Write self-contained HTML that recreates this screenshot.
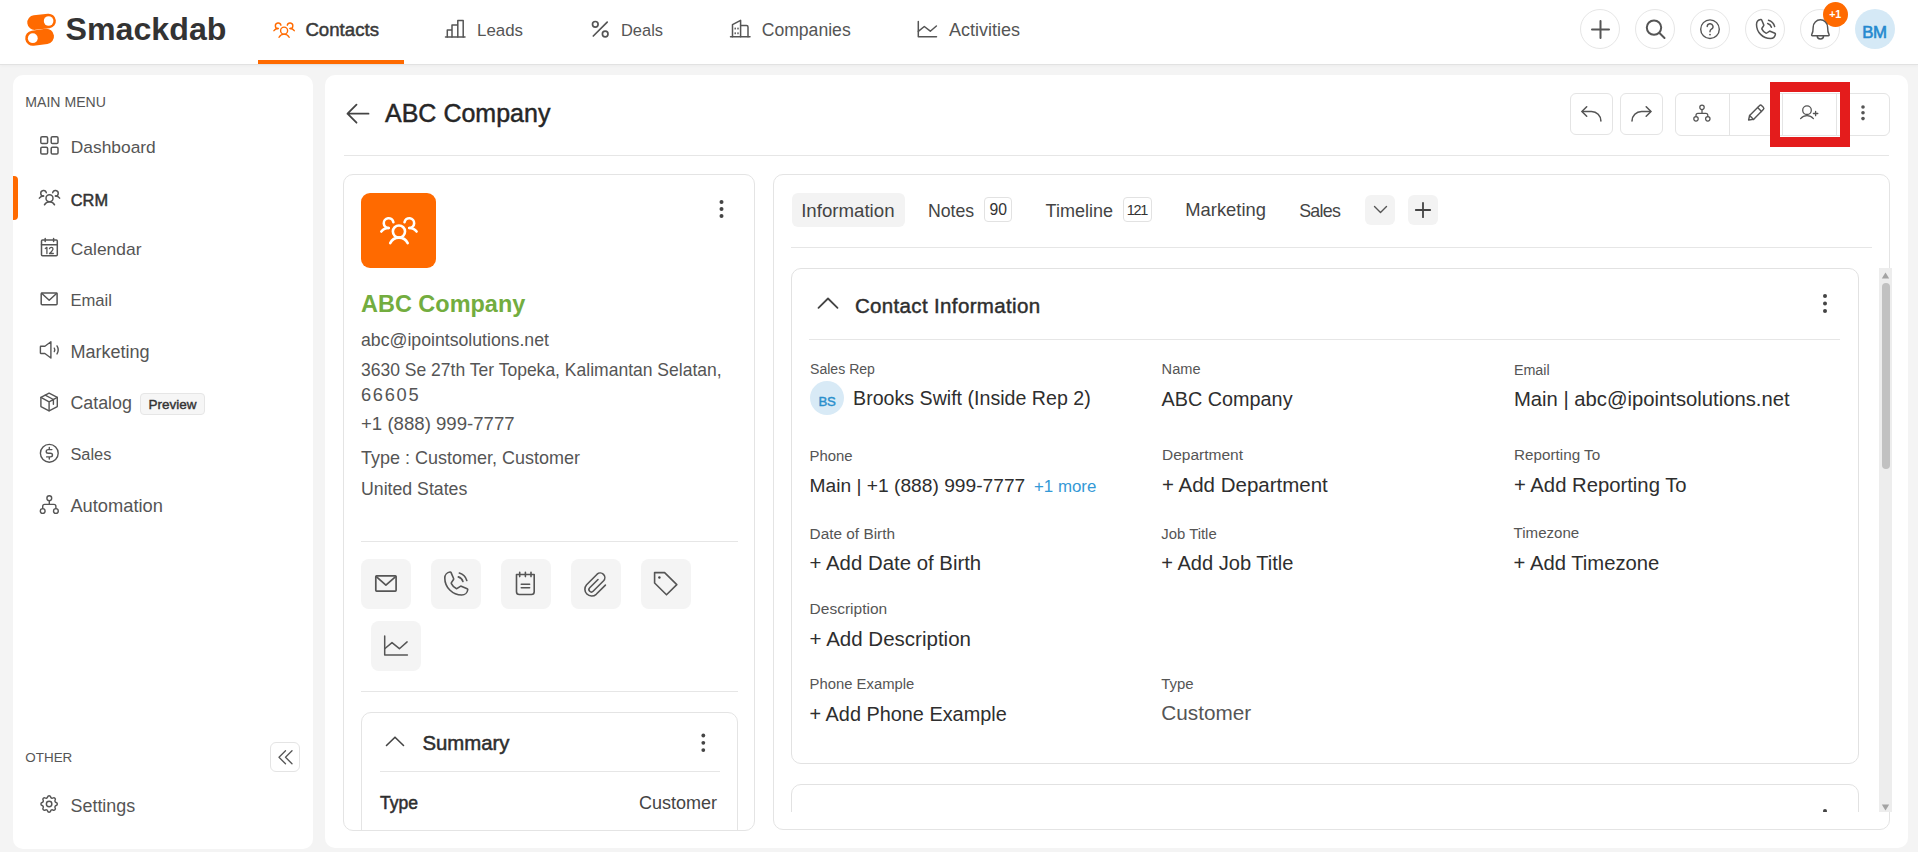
<!DOCTYPE html>
<html><head><meta charset="utf-8"><title>Smackdab - ABC Company</title>
<style>
html,body{margin:0;padding:0;}
body{width:1918px;height:852px;position:relative;overflow:hidden;background:#f4f4f4;font-family:"Liberation Sans",sans-serif;}
text{font-family:"Liberation Sans",sans-serif;white-space:pre;}
.a{position:absolute;box-sizing:border-box;}
svg.i{position:absolute;overflow:visible;fill:none;stroke:#555;stroke-width:1.5;stroke-linecap:round;stroke-linejoin:round;}
</style></head><body>
<!-- header -->
<div class="a" style="left:0;top:0;width:1918px;height:64px;background:#fff;border-bottom:1px solid #e2e2e2;height:65px;box-shadow:0 1px 3px rgba(0,0,0,.035)"></div>
<div class="a" style="left:258px;top:60px;width:146px;height:4px;background:#ff6a00"></div>
<!-- sidebar card -->
<div class="a" style="left:13px;top:75px;width:300px;height:774px;background:#fff;border-radius:10px"></div>
<div class="a" style="left:13px;top:176px;width:5px;height:44px;background:#ff6a00;border-radius:0 4px 4px 0"></div>
<div class="a" style="left:140px;top:393px;width:65px;height:22px;background:#f6f6f6;border:1px solid #e6e6e6;border-radius:4px"></div>
<div class="a" style="left:270px;top:742px;width:30px;height:30px;background:#fff;border:1px solid #e4e4e4;border-radius:6px"></div>
<!-- main card -->
<div class="a" style="left:325px;top:75px;width:1583px;height:773px;background:#fff;border-radius:10px"></div>
<div class="a" style="left:344px;top:155px;width:1545px;height:1px;background:#e6e6e6"></div>
<!-- toolbar -->
<div class="a" style="left:1570px;top:93px;width:43px;height:42px;border:1px solid #e4e4e4;border-radius:6px"></div>
<div class="a" style="left:1620px;top:93px;width:43px;height:42px;border:1px solid #e4e4e4;border-radius:6px"></div>
<div class="a" style="left:1675px;top:93px;width:215px;height:43px;border:1px solid #e4e4e4;border-radius:6px"></div>
<div class="a" style="left:1729px;top:93px;width:1px;height:43px;background:#e4e4e4"></div>
<div class="a" style="left:1782px;top:93px;width:1px;height:43px;background:#e4e4e4"></div>
<div class="a" style="left:1836px;top:93px;width:1px;height:43px;background:#e4e4e4"></div>
<!-- header circles -->
<div class="a" style="left:1580px;top:9px;width:40px;height:40px;border:1px solid #e6e6e6;border-radius:50%"></div>
<div class="a" style="left:1635px;top:9px;width:40px;height:40px;border:1px solid #e6e6e6;border-radius:50%"></div>
<div class="a" style="left:1690px;top:9px;width:40px;height:40px;border:1px solid #e6e6e6;border-radius:50%"></div>
<div class="a" style="left:1745px;top:9px;width:40px;height:40px;border:1px solid #e6e6e6;border-radius:50%"></div>
<div class="a" style="left:1800px;top:9px;width:40px;height:40px;border:1px solid #e6e6e6;border-radius:50%"></div>
<div class="a" style="left:1855px;top:9px;width:40px;height:40px;background:#d5e9f6;border-radius:50%"></div>
<div class="a" style="left:1823px;top:1.5px;width:25px;height:25px;background:#ff6a00;border-radius:50%"></div>
<!-- left card -->
<div class="a" style="left:343px;top:174px;width:412px;height:657px;border:1px solid #e4e4e4;border-radius:10px;overflow:hidden">
  <div class="a" style="left:17px;top:18px;width:75px;height:75px;background:#ff6a00;border-radius:9px"></div>
  <div class="a" style="left:17px;top:366px;width:377px;height:1px;background:#e6e6e6"></div>
  <div class="a" style="left:17px;top:384px;width:50px;height:50px;background:#f4f4f4;border-radius:8px"></div>
  <div class="a" style="left:87px;top:384px;width:50px;height:50px;background:#f4f4f4;border-radius:8px"></div>
  <div class="a" style="left:157px;top:384px;width:50px;height:50px;background:#f4f4f4;border-radius:8px"></div>
  <div class="a" style="left:227px;top:384px;width:50px;height:50px;background:#f4f4f4;border-radius:8px"></div>
  <div class="a" style="left:297px;top:384px;width:50px;height:50px;background:#f4f4f4;border-radius:8px"></div>
  <div class="a" style="left:27px;top:446px;width:50px;height:50px;background:#f4f4f4;border-radius:8px"></div>
  <div class="a" style="left:17px;top:516px;width:377px;height:1px;background:#e6e6e6"></div>
  <div class="a" style="left:17px;top:537px;width:377px;height:140px;border:1px solid #e4e4e4;border-radius:10px"></div>
  <div class="a" style="left:36px;top:596px;width:340px;height:1px;background:#e6e6e6"></div>
</div>
<!-- right card -->
<div class="a" style="left:773px;top:174px;width:1117px;height:656px;border:1px solid #e4e4e4;border-radius:10px"></div>
<div class="a" style="left:792px;top:193px;width:113px;height:34px;background:#f3f3f3;border-radius:6px"></div>
<div class="a" style="left:984px;top:197px;width:28px;height:25px;border:1px solid #e2e2e2;border-radius:4px"></div>
<div class="a" style="left:1123px;top:197px;width:29px;height:25px;border:1px solid #e2e2e2;border-radius:4px"></div>
<div class="a" style="left:1365px;top:195px;width:30px;height:30px;background:#f3f3f3;border-radius:6px"></div>
<div class="a" style="left:1408px;top:195px;width:30px;height:30px;background:#f3f3f3;border-radius:6px"></div>
<div class="a" style="left:791px;top:247px;width:1081px;height:1px;background:#e6e6e6"></div>
<!-- scroll area -->
<div class="a" style="left:774px;top:268px;width:1118px;height:544px;overflow:hidden">
  <div class="a" style="left:17px;top:0px;width:1068px;height:496px;border:1px solid #e2e2e2;border-radius:10px"></div>
  <div class="a" style="left:35px;top:71px;width:1031px;height:1px;background:#e6e6e6"></div>
  <div class="a" style="left:36px;top:113px;width:34px;height:34px;background:#d8eaf6;border-radius:50%"></div>
  <div class="a" style="left:17px;top:516px;width:1068px;height:200px;border:1px solid #e2e2e2;border-radius:10px"></div>
  <div class="a" style="left:1049px;top:541px;width:4px;height:4px;background:#444;border-radius:50%"></div>
  <!-- scrollbar -->
  <div class="a" style="left:1105px;top:0;width:13px;height:544px;background:#ededed"></div>
  <div class="a" style="left:1108px;top:15px;width:8px;height:186px;background:#c1c1c1;border-radius:4px"></div>
</div>
<!-- red highlight -->
<div class="a" style="left:1770px;top:82px;width:80px;height:65px;border:10px solid #e41c1c"></div>
<svg class="a" style="left:0;top:0;width:1918px;height:852px;overflow:visible" width="1918" height="852" viewBox="0 0 1918 852" fill="none" stroke="#555" stroke-width="1.5" stroke-linecap="round" stroke-linejoin="round">
<!-- logo -->
<g stroke="none">
  <line x1="34.6" y1="22.6" x2="48.6" y2="21" stroke="#ff6a00" stroke-width="14.6" stroke-linecap="round"/>
  <line x1="32.8" y1="38.2" x2="46.4" y2="36.4" stroke="#ff6a00" stroke-width="15.2" stroke-linecap="round"/>
  <circle cx="48.6" cy="21" r="4.8" fill="#fff"/>
  <circle cx="32.8" cy="38.2" r="4.9" fill="#fff"/>
</g>
<!-- contacts nav icon (orange) -->
<g transform="translate(272.9,18.4) scale(0.0875)" stroke="#ff6a00" stroke-width="16">
  <circle cx="128" cy="140" r="40"/><path d="M196,116a59.8,59.8,0,0,1,48,24"/><path d="M12,140a59.8,59.8,0,0,1,48-24"/><path d="M70.4,216a64.1,64.1,0,0,1,115.2,0"/><path d="M60,116A32,32,0,1,1,91.4,78"/><path d="M164.6,78A32,32,0,1,1,196,116"/>
</g>
<!-- leads -->
<g stroke-width="1.5"><path d="M445.5,37H465"/><path d="M447.3,37V29.9H452V37M452,37V25.1H457.8V37M457.8,37V20.4H463.2V37"/></g>
<!-- deals -->
<g stroke-width="1.7"><circle cx="595.3" cy="24.3" r="2.8"/><circle cx="605.2" cy="34" r="2.8"/><path d="M593.3,36L607.2,22.1"/></g>
<!-- companies -->
<g stroke-width="1.5"><path d="M730.5,36.8H750"/><path d="M732.5,36.8V24.6L740.6,20.4V36.8"/><path d="M740.6,25.6H746.5Q748,25.6 748,27.1V36.8"/></g>
<g fill="#555" stroke="none"><rect x="734.5" y="27.6" width="1.4" height="2" rx=".5"/><rect x="737.3" y="27.6" width="1.4" height="2" rx=".5"/><rect x="734.5" y="32.3" width="1.4" height="2" rx=".5"/><rect x="737.3" y="32.3" width="1.4" height="2" rx=".5"/></g>
<!-- activities -->
<g stroke-width="1.5"><path d="M918.3,21.4V36.8H936.5"/><path d="M918.3,31.4L924.3,26.5L930.3,31.2L936.4,26"/></g>
<!-- header right icons -->
<g stroke-width="2"><path d="M1600.5,21V38M1592,29.5H1609"/></g>
<g stroke-width="2"><circle cx="1654" cy="27.6" r="7.2"/><path d="M1659.2,32.8L1664.5,38"/></g>
<g stroke-width="1.4"><circle cx="1710" cy="29.2" r="9.3"/><path d="M1707.2,26.6a2.9,2.9 0 1 1 4.2,2.6q-1.4,.7 -1.4,2.2v.4"/></g>
<circle cx="1710" cy="34.6" r=".9" fill="#555" stroke="none"/>
<g transform="translate(1752.4,16.2) scale(0.103)" stroke-width="14.6">
  <path d="M92.5,124.8a83.6,83.6,0,0,0,39,38.9,8,8,0,0,0,7.9-.6l25-16.7a7.9,7.9,0,0,1,7.6-.7l46.8,20.1a7.9,7.9,0,0,1,4.8,8.3A48,48,0,0,1,176,216,136,136,0,0,1,40,80,48,48,0,0,1,81.9,32.4a7.9,7.9,0,0,1,8.3,4.8l20.1,46.9a8,8,0,0,1-.6,7.5L93,117A8,8,0,0,0,92.5,124.8Z"/><path d="M156.4,40A88.2,88.2,0,0,1,216,99.6"/><path d="M148.2,71A56.1,56.1,0,0,1,185,107.8"/>
</g>
<g transform="translate(1807.6,16.6) scale(0.1)" stroke-width="14.5">
  <path d="M96,192a32,32,0,0,0,64,0"/><path d="M56,104a72,72,0,0,1,144,0c0,35.8,8.2,64.5,14.8,76A8,8,0,0,1,208,192H48a8,8,0,0,1-6.9-12C47.7,168.5,56,139.8,56,104Z"/>
</g>
<!-- page back arrow -->
<g stroke="#444" stroke-width="1.8"><path d="M347.5,113.7H368.5M356.5,104.7L347.5,113.7L356.5,122.7"/></g>
<!-- toolbar icons -->
<g stroke-width="1.55"><path d="M1586.7,106.7L1581.9,111.5L1586.7,116.3"/><path d="M1582.3,111.5H1591.5A9.5,9.5 0 0 1 1600.9,121"/></g>
<g stroke-width="1.55"><path d="M1646.2,106.7L1651,111.5L1646.2,116.3"/><path d="M1650.6,111.5H1641.5A9.5,9.5 0 0 0 1632,121"/></g>
<g stroke-width="1.25"><circle cx="1702" cy="107.3" r="2.2"/><circle cx="1696" cy="118.8" r="2.2"/><circle cx="1707.8" cy="118.8" r="2.2"/><path d="M1702,109.5V113.3M1696,116.6V115.3Q1696,113.3 1698,113.3H1705.8Q1707.8,113.3 1707.8,115.3V116.6"/></g>
<g stroke-width="1.4"><path d="M1748.6,120L1749.6,115.5L1759.4,105.7Q1760.6,104.5 1761.8,105.7L1763.3,107.2Q1764.5,108.4 1763.3,109.6L1753.5,119.4Z"/><path d="M1757.6,107.5L1761.5,111.4M1749.6,115.5L1753.5,119.4"/></g>
<g stroke-width="1.3"><circle cx="1807" cy="110.2" r="4.3"/><path d="M1800.6,118.6A8.5,8.5 0 0 1 1813.4,118.6"/><path d="M1815.6,111.3V115.7M1813.4,113.5H1817.8"/></g>
<g fill="#555" stroke="none"><circle cx="1863" cy="107" r="1.8"/><circle cx="1863" cy="112.8" r="1.8"/><circle cx="1863" cy="118.6" r="1.8"/></g>
<!-- sidebar icons -->
<g stroke-width="1.5"><rect x="40.8" y="136.8" width="6.8" height="6.8" rx="1.3"/><rect x="51.2" y="136.8" width="6.8" height="6.8" rx="1.3"/><rect x="40.8" y="147.2" width="6.8" height="6.8" rx="1.3"/><rect x="51.2" y="147.2" width="6.8" height="6.8" rx="1.3"/></g>
<g transform="translate(38.3,185.9) scale(0.0875)" stroke-width="17">
  <circle cx="128" cy="140" r="40"/><path d="M196,116a59.8,59.8,0,0,1,48,24"/><path d="M12,140a59.8,59.8,0,0,1,48-24"/><path d="M70.4,216a64.1,64.1,0,0,1,115.2,0"/><path d="M60,116A32,32,0,1,1,91.4,78"/><path d="M164.6,78A32,32,0,1,1,196,116"/>
</g>
<g stroke-width="1.5"><rect x="41.5" y="240" width="15.8" height="15.8" rx="1"/><path d="M41.5,244.8H57.3M45.2,238.6V241.4M53.6,238.6V241.4"/></g>
<g stroke-width="1.3"><path d="M45.3,248.5L46.9,247.4V253.6"/><path d="M49.5,248.7Q49.8,247.3 51.3,247.3Q53,247.3 53,248.9Q53,250.1 49.5,253.5H53.3"/></g>
<g stroke-width="1.5"><rect x="41.2" y="292.9" width="15.9" height="11.8" rx="1"/><path d="M41.6,293.3L49.2,300.3L56.8,293.3"/></g>
<g stroke-width="1.4"><path d="M44.9,346.3H40.8Q40.4,346.3 40.4,346.7V353.1Q40.4,353.5 40.8,353.5H44.9L50.9,358V341.8Z"/><path d="M54.3,348.2Q55.3,349.9 54.3,351.6M57,345.9Q59.4,349.9 57,353.9"/></g>
<g stroke-width="1.4"><path d="M49.1,393.2L57.3,397.4V406.6L49.1,410.8L40.9,406.6V397.4Z"/><path d="M40.9,397.4L49.1,401.8L57.3,397.4M49.1,401.8V410.8M45.2,395.2L53.4,399.5V404.2"/></g>
<g stroke-width="1.4"><circle cx="49.3" cy="453.3" r="8.9"/><path d="M51.9,449.6H48.3Q46.2,449.6 46.2,451.4Q46.2,453.2 48.3,453.2H50.4Q52.5,453.2 52.5,455.1Q52.5,456.9 50.4,456.9H46.6M49.3,447.4V449.6M49.3,456.9V459"/></g>
<g stroke-width="1.4"><circle cx="49.3" cy="498.2" r="2.4"/><circle cx="42.7" cy="511" r="2.4"/><circle cx="55.9" cy="511" r="2.4"/><path d="M49.3,500.6V504.4M42.7,508.6V506.4Q42.7,504.4 44.7,504.4H53.9Q55.9,504.4 55.9,506.4V508.6"/></g>
<g transform="translate(38.2,793.1) scale(0.91)" stroke-width="1.6">
  <path d="M10.325 4.317c.426 -1.756 2.924 -1.756 3.35 0a1.724 1.724 0 0 0 2.573 1.066c1.543 -.94 3.31 .826 2.37 2.37a1.724 1.724 0 0 0 1.065 2.572c1.756 .426 1.756 2.924 0 3.35a1.724 1.724 0 0 0 -1.066 2.573c.94 1.543 -.826 3.31 -2.37 2.37a1.724 1.724 0 0 0 -2.572 1.065c-.426 1.756 -2.924 1.756 -3.35 0a1.724 1.724 0 0 0 -2.573 -1.066c-1.543 .94 -3.31 -.826 -2.37 -2.37a1.724 1.724 0 0 0 -1.065 -2.572c-1.756 -.426 -1.756 -2.924 0 -3.35a1.724 1.724 0 0 0 1.066 -2.573c-.94 -1.543 .826 -3.31 2.37 -2.37c1 .608 2.296 .07 2.572 -1.065z"/><path d="M9 12a3 3 0 1 0 6 0a3 3 0 0 0 -6 0"/>
</g>
<g stroke-width="1.3"><path d="M285.5,750.8L279,757.3L285.5,763.8M292,750.8L285.5,757.3L292,763.8"/></g>
<!-- left card -->
<g transform="translate(379.5,210.3) scale(0.152)" stroke="#fff" stroke-width="17">
  <circle cx="128" cy="140" r="40"/><path d="M196,116a59.8,59.8,0,0,1,48,24"/><path d="M12,140a59.8,59.8,0,0,1,48-24"/><path d="M70.4,216a64.1,64.1,0,0,1,115.2,0"/><path d="M60,116A32,32,0,1,1,91.4,78"/><path d="M164.6,78A32,32,0,1,1,196,116"/>
</g>
<g fill="#444" stroke="none"><circle cx="721.5" cy="202" r="2"/><circle cx="721.5" cy="209" r="2"/><circle cx="721.5" cy="216" r="2"/></g>
<g stroke-width="1.7"><rect x="375.8" y="575.9" width="20.3" height="15.2" rx=".8"/><path d="M376.3,576.6L385.9,585.1L395.6,576.6"/></g>
<g transform="translate(439.8,568) scale(0.125)" stroke-width="12.8">
  <path d="M92.5,124.8a83.6,83.6,0,0,0,39,38.9,8,8,0,0,0,7.9-.6l25-16.7a7.9,7.9,0,0,1,7.6-.7l46.8,20.1a7.9,7.9,0,0,1,4.8,8.3A48,48,0,0,1,176,216,136,136,0,0,1,40,80,48,48,0,0,1,81.9,32.4a7.9,7.9,0,0,1,8.3,4.8l20.1,46.9a8,8,0,0,1-.6,7.5L93,117A8,8,0,0,0,92.5,124.8Z"/><path d="M156.4,40A88.2,88.2,0,0,1,216,99.6"/><path d="M148.2,71A56.1,56.1,0,0,1,185,107.8"/>
</g>
<g stroke-width="1.6"><path d="M516.5,574.5H534.2V591.7Q534.2,594.5 531.4,594.5H519.3Q516.5,594.5 516.5,591.7Z"/><path d="M519.7,572.2V576.6M525.4,572.2V576.6M531,572.2V576.6M521.3,584.2H529.6M521.3,587.8H529.6"/></g>
<g stroke-width="1.6"><path d="M598,579.5L589.7,587.8A2.4,2.4 0 0 0 593.1,591.2L603.6,580.7A4.6,4.6 0 0 0 597.1,574.2L586.6,584.7A6.8,6.8 0 0 0 596.2,594.3L605.4,585.1"/></g>
<g stroke-width="1.6"><path d="M654.6,572.6H664.6L676.8,584.6L666.5,594.8L654.6,583Z"/></g>
<circle cx="659.4" cy="577.5" r="1.2" fill="#444" stroke="none"/>
<g stroke-width="1.5"><path d="M384.7,636V655.1H407.4"/><path d="M384.7,648.8L392,642.6L399.4,648.7L407.1,641.9"/></g>
<g stroke-width="1.6" stroke="#444"><path d="M386.5,745.5L395,737.2L403.5,745.5"/></g>
<g fill="#444" stroke="none"><circle cx="703.3" cy="735.5" r="1.9"/><circle cx="703.3" cy="742.8" r="1.9"/><circle cx="703.3" cy="750.1" r="1.9"/></g>
<!-- right card -->
<g stroke-width="1.4"><path d="M1374.5,206.5L1380.5,212.5L1386.5,206.5"/></g>
<g stroke-width="1.8" stroke="#444"><path d="M1423,202.8V217.2M1415.8,210H1430.2"/></g>
<g stroke-width="1.8" stroke="#444"><path d="M818.5,307.8L828,298.5L837.5,307.8"/></g>
<g fill="#444" stroke="none"><circle cx="1825" cy="296" r="2"/><circle cx="1825" cy="303.5" r="2"/><circle cx="1825" cy="311" r="2"/></g>
<!-- scrollbar arrows -->
<path d="M1881.8,278.5L1885.5,272.5L1889.2,278.5Z" fill="#a3a3a3" stroke="none"/>
<path d="M1881.8,804.5L1885.5,810.5L1889.2,804.5Z" fill="#a3a3a3" stroke="none"/>
</svg>

<svg class="a" style="left:0;top:0;overflow:visible" width="1918" height="852" viewBox="0 0 1918 852">
<text x='65.5' y='40' font-size='32.18' font-weight='700' fill='#333333' style=''>Smackdab</text>
<text x='305.4' y='36' font-size='18.65' font-weight='400' fill='#3a3a3a' style='stroke:#3a3a3a;stroke-width:0.5px'>Contacts</text>
<text x='477.0' y='36' font-size='16.88' font-weight='400' fill='#555' style=''>Leads</text>
<text x='621.0' y='36' font-size='16.43' font-weight='400' fill='#555' style=''>Deals</text>
<text x='761.7' y='36' font-size='17.60' font-weight='400' fill='#555' style=''>Companies</text>
<text x='949.0' y='36' font-size='18.00' font-weight='400' fill='#555' style=''>Activities</text>
<text x='1862.3' y='38' font-size='16.80' font-weight='400' fill='#2589cf' style='letter-spacing:-0.4px;stroke:#2589cf;stroke-width:0.6px'>BM</text>
<text x='1829.3' y='18' font-size='10.60' font-weight='700' fill='#ffffff' style='letter-spacing:-0.3px'>+1</text>
<text x='385.0' y='122' font-size='25.02' font-weight='400' fill='#262626' style='stroke:#262626;stroke-width:0.45px'>ABC Company</text>
<text x='25.3' y='107' font-size='14.09' font-weight='400' fill='#555' style=''>MAIN MENU</text>
<text x='70.8' y='153' font-size='17.37' font-weight='400' fill='#555' style=''>Dashboard</text>
<text x='70.8' y='206' font-size='16.38' font-weight='400' fill='#333' style='stroke:#333;stroke-width:0.5px'>CRM</text>
<text x='70.8' y='255' font-size='17.42' font-weight='400' fill='#555' style=''>Calendar</text>
<text x='70.4' y='306' font-size='16.64' font-weight='400' fill='#555' style=''>Email</text>
<text x='70.4' y='358' font-size='18.06' font-weight='400' fill='#555' style=''>Marketing</text>
<text x='70.4' y='409' font-size='17.87' font-weight='400' fill='#555' style=''>Catalog</text>
<text x='148.6' y='409' font-size='13.50' font-weight='400' fill='#333' style='stroke:#333;stroke-width:0.4px'>Preview</text>
<text x='70.4' y='460' font-size='16.39' font-weight='400' fill='#555' style=''>Sales</text>
<text x='70.4' y='512' font-size='18.31' font-weight='400' fill='#555' style=''>Automation</text>
<text x='25.3' y='762' font-size='13.43' font-weight='400' fill='#555' style=''>OTHER</text>
<text x='70.5' y='812' font-size='17.91' font-weight='400' fill='#555' style=''>Settings</text>
<text x='361.0' y='312' font-size='23.47' font-weight='700' fill='#73ad3f' style=''>ABC Company</text>
<text x='361.0' y='346' font-size='17.68' font-weight='400' fill='#555' style=''>abc@ipointsolutions.net</text>
<text x='361.0' y='376' font-size='17.53' font-weight='400' fill='#555' style=''>3630 Se 27th Ter Topeka, Kalimantan Selatan,</text>
<text x='361.0' y='401' font-size='18.30' font-weight='400' fill='#555' style='letter-spacing:1.7px'>66605</text>
<text x='361.0' y='430' font-size='18.62' font-weight='400' fill='#555' style=''>+1 (888) 999-7777</text>
<text x='361.0' y='464' font-size='17.99' font-weight='400' fill='#555' style=''>Type : Customer, Customer</text>
<text x='361.0' y='495' font-size='17.72' font-weight='400' fill='#555' style=''>United States</text>
<text x='422.4' y='750' font-size='20.38' font-weight='400' fill='#2e2e2e' style='stroke:#2e2e2e;stroke-width:0.5px'>Summary</text>
<text x='380.0' y='809' font-size='17.53' font-weight='400' fill='#2e2e2e' style='stroke:#2e2e2e;stroke-width:0.5px'>Type</text>
<text x='639.0' y='809' font-size='18.00' font-weight='400' fill='#444' style=''>Customer</text>
<text x='801.2' y='217' font-size='18.67' font-weight='400' fill='#444' style=''>Information</text>
<text x='928.0' y='217' font-size='17.69' font-weight='400' fill='#444' style=''>Notes</text>
<text x='989.5' y='215' font-size='15.73' font-weight='400' fill='#333' style=''>90</text>
<text x='1045.6' y='217' font-size='18.01' font-weight='400' fill='#444' style=''>Timeline</text>
<text x='1126.8' y='215' font-size='14.50' font-weight='400' fill='#333' style='letter-spacing:-1.4px'>121</text>
<text x='1185.3' y='216' font-size='18.36' font-weight='400' fill='#444' style=''>Marketing</text>
<text x='1299.2' y='217' font-size='17.80' font-weight='400' fill='#444' style='letter-spacing:-0.7px'>Sales</text>
<text x='854.9' y='313' font-size='20.50' font-weight='400' fill='#2e2e2e' style='letter-spacing:0.35px;stroke:#2e2e2e;stroke-width:0.45px'>Contact Information</text>
<text x='810.0' y='374' font-size='14.09' font-weight='400' fill='#555' style=''>Sales Rep</text>
<text x='818.6' y='406' font-size='13.20' font-weight='400' fill='#2a8fcc' style='letter-spacing:-0.3px;stroke:#2a8fcc;stroke-width:0.45px'>BS</text>
<text x='853.1' y='405' font-size='19.62' font-weight='400' fill='#2e2e2e' style=''>Brooks Swift (Inside Rep 2)</text>
<text x='1161.6' y='374' font-size='14.62' font-weight='400' fill='#555' style=''>Name</text>
<text x='1161.6' y='406' font-size='19.81' font-weight='400' fill='#2e2e2e' style=''>ABC Company</text>
<text x='1513.9' y='375' font-size='14.32' font-weight='400' fill='#555' style=''>Email</text>
<text x='1514.0' y='406' font-size='20.24' font-weight='400' fill='#2e2e2e' style=''>Main | abc@ipointsolutions.net</text>
<text x='809.6' y='461' font-size='14.90' font-weight='400' fill='#555' style=''>Phone</text>
<text x='809.6' y='492' font-size='19.19' font-weight='400' fill='#2e2e2e' style=''>Main | +1 (888) 999-7777</text>
<text x='1034.0' y='492' font-size='16.88' font-weight='400' fill='#3499d6' style=''>+1 more</text>
<text x='1162.0' y='460' font-size='15.50' font-weight='400' fill='#555' style=''>Department</text>
<text x='1162.0' y='492' font-size='20.50' font-weight='400' fill='#2e2e2e' style=''>+ Add Department</text>
<text x='1514.0' y='460' font-size='15.25' font-weight='400' fill='#555' style=''>Reporting To</text>
<text x='1514.0' y='492' font-size='20.27' font-weight='400' fill='#2e2e2e' style=''>+ Add Reporting To</text>
<text x='809.6' y='539' font-size='15.36' font-weight='400' fill='#555' style=''>Date of Birth</text>
<text x='809.6' y='570' font-size='20.39' font-weight='400' fill='#2e2e2e' style=''>+ Add Date of Birth</text>
<text x='1161.3' y='539' font-size='14.88' font-weight='400' fill='#555' style=''>Job Title</text>
<text x='1161.3' y='570' font-size='20.07' font-weight='400' fill='#2e2e2e' style=''>+ Add Job Title</text>
<text x='1513.6' y='538' font-size='15.09' font-weight='400' fill='#555' style=''>Timezone</text>
<text x='1513.6' y='570' font-size='20.24' font-weight='400' fill='#2e2e2e' style=''>+ Add Timezone</text>
<text x='809.6' y='614' font-size='15.51' font-weight='400' fill='#555' style=''>Description</text>
<text x='809.6' y='646' font-size='20.52' font-weight='400' fill='#2e2e2e' style=''>+ Add Description</text>
<text x='809.6' y='689' font-size='14.83' font-weight='400' fill='#555' style=''>Phone Example</text>
<text x='809.6' y='721' font-size='19.87' font-weight='400' fill='#2e2e2e' style=''>+ Add Phone Example</text>
<text x='1161.3' y='689' font-size='14.94' font-weight='400' fill='#555' style=''>Type</text>
<text x='1161.3' y='720' font-size='20.74' font-weight='400' fill='#555' style=''>Customer</text>
</svg>
</body></html>
